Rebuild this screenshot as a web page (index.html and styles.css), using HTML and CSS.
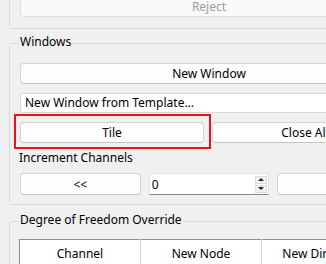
FILE: index.html
```html
<!DOCTYPE html>
<html lang="en">
<head>
  <meta charset="UTF-8">
  <title>Windows Panel</title>
  <link rel="stylesheet" href="styles.css">
</head>
<body>
  <div class="page">
    <!-- Previous group, scrolled mostly out of view -->
    <div class="group group-top">
      <button class="btn btn-full" disabled>Reject</button>
    </div>

    <!-- Windows -->
    <div class="group group-windows">
      <span class="group-title">Windows</span>
      <button class="btn btn-full">New Window</button>
      <div class="combo">New Window from Template...</div>
      <div class="row row-two">
        <div class="highlight"><button class="btn">Tile</button></div>
        <button class="btn">Close All</button>
      </div>
      <div class="field-label">Increment Channels</div>
      <div class="row row-three">
        <button class="btn">&lt;&lt;</button>
        <div class="spin">
          <span class="spin-value">0</span>
          <div class="spin-arrows">
            <span class="spin-up"></span>
            <span class="spin-down"></span>
          </div>
        </div>
        <button class="btn">&gt;&gt;</button>
      </div>
    </div>

    <!-- Degree of Freedom Override -->
    <div class="group group-dof">
      <span class="group-title">Degree of Freedom Override</span>
      <table class="dof-table">
        <thead>
          <tr>
            <th>Channel</th>
            <th>New Node</th>
            <th>New Direction</th>
          </tr>
        </thead>
      </table>
    </div>
  </div>
</body>
</html>
```

FILE: styles.css
```css
body {
  margin: 0;
  width: 326px;
  height: 264px;
  overflow: hidden;
  background: #f0f0f0;
  font-family: "Noto Sans", "Open Sans", sans-serif;
  font-size: 12px;
  color: #000;
}

.page {
  width: 400px;
  padding-left: 9px;
}

.group {
  position: relative;
  border: 1px solid #dadada;
  border-radius: 2px;
  padding: 19px 10px 9px 10px;
  display: flex;
  flex-direction: column;
}

.group-top {
  margin-top: -15px;
  padding-top: 10px;
  padding-bottom: 11px;
}

.group-windows {
  margin-top: 14px;
}

.group-dof {
  margin-top: 16px;
  padding: 17px 9px 40px 9px;
}

.group-title {
  position: absolute;
  top: -10px;
  left: 9px;
  padding: 0 1px;
  line-height: 16px;
  background: #f0f0f0;
}

.btn {
  height: 21px;
  padding: 0;
  background: #fdfdfd;
  border: 1px solid #d3d3d3;
  border-bottom-color: #c4c4c4;
  border-radius: 4px;
  font-family: inherit;
  font-size: 12px;
  color: #000;
}

.btn:disabled {
  color: #9d9d9d;
  background: #f9f9f9;
  border-color: #e0e0e0;
}

.btn-full {
  width: 100%;
}

.combo {
  margin-top: 9px;
  height: 20px;
  line-height: 18px;
  padding-left: 4px;
  background: #fff;
  border: 1px solid #d6d6d6;
  border-radius: 3px;
  box-sizing: border-box;
}

.row {
  display: flex;
}

.row-two {
  margin-top: 9px;
  gap: 8px;
}

.row-two > * {
  flex: 1;
}

.row-two .btn {
  width: 100%;
}

.highlight {
  position: relative;
  display: flex;
}

.highlight::after {
  content: "";
  position: absolute;
  top: -8px;
  left: -6px;
  right: -7px;
  bottom: -6px;
  border: 2px solid #e8141b;
}

.field-label {
  margin-top: 7px;
  line-height: 16px;
  padding-left: 0;
  margin-left: -1px;
}

.row-three {
  margin-top: 7px;
  gap: 8px;
}

.row-three > * {
  flex: 1;
  height: 22px;
}

.spin {
  position: relative;
  display: flex;
  align-items: center;
  background: #fff;
  border: 1px solid #e2e2e2;
  border-bottom: 1px solid #868686;
  border-radius: 3px 3px 0 0;
  box-sizing: border-box;
}

.spin-value {
  padding-left: 2px;
}

.spin-arrows {
  margin-left: auto;
  margin-right: 1px;
  display: flex;
  flex-direction: column;
  gap: 1px;
}

.spin-up,
.spin-down {
  width: 12px;
  height: 8px;
  background: #f3f3f3;
  border: 1px solid #dcdcdc;
  box-sizing: border-box;
  display: flex;
  align-items: center;
  justify-content: center;
}

.spin-up::before {
  content: "";
  border-left: 3px solid transparent;
  border-right: 3px solid transparent;
  border-bottom: 3px solid #222;
}

.spin-down::before {
  content: "";
  border-left: 3px solid transparent;
  border-right: 3px solid transparent;
  border-top: 3px solid #222;
}

.dof-table {
  border-collapse: collapse;
  background: #fff;
  border: 1px solid #8f8f8f;
  table-layout: fixed;
  width: 361px;
}

.dof-table th {
  width: 120px;
  height: 26px;
  font-weight: normal;
  text-align: center;
  border-right: 1px solid #dadada;
  border-bottom: 1px solid #dadada;
  white-space: nowrap;
  overflow: hidden;
  padding: 0;
}
```
